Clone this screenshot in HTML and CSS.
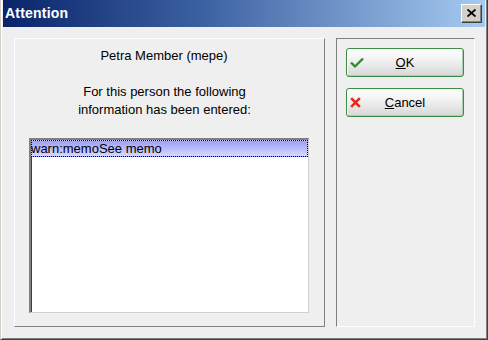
FILE: index.html
```html
<!DOCTYPE html>
<html>
<head>
<meta charset="utf-8">
<link rel="stylesheet" href="styles.css">
</head>
<body>
<div class="window">
  <div class="titlebar">
    <span class="title">Attention</span>
    <div class="close">
      <svg width="9" height="8" viewBox="0 0 9 8"><path d="M0.5 0.5 L8.5 7.5 M8.5 0.5 L0.5 7.5" stroke="#000" stroke-width="1.8" fill="none"/></svg>
    </div>
  </div>
  <div class="body">
    <div class="panel-left">
      <div class="name">Petra Member (mepe)</div>
      <div class="msg">For this person the following<br>information has been entered:</div>
      <div class="listbox">
        <div class="item selected">warn:memoSee memo</div>
      </div>
    </div>
    <div class="panel-right">
      <button class="btn btn-default">
        <svg class="ico" width="14" height="11" viewBox="0 0 14 11"><path d="M1 5.5 L5 9.5 L13 1.5" stroke="#2e8b2e" stroke-width="2.4" fill="none" stroke-linejoin="round"/></svg>
        <span class="label"><u>O</u>K</span>
      </button>
      <button class="btn">
        <svg class="ico" width="11" height="11" viewBox="0 0 11 11"><path d="M1.2 1.2 L9.8 9.8 M9.8 1.2 L1.2 9.8" stroke="#e8281c" stroke-width="2.6" fill="none"/></svg>
        <span class="label"><u>C</u>ancel</span>
      </button>
    </div>
  </div>
</div>
</body>
</html>
```
FILE: styles.css
```css
* { box-sizing: border-box; }
html, body { margin: 0; padding: 0; }
body {
  width: 488px;
  height: 340px;
  overflow: hidden;
  font-family: "Liberation Sans", Arial, sans-serif;
  font-size: 13px;
  color: #000;
  background: #efefef;
}
.window {
  width: 488px;
  height: 340px;
  display: flex;
  flex-direction: column;
  border-left: 1px solid #d4d0c8;
  border-right: 1px solid #404040;
  border-bottom: 1px solid #404040;
  box-shadow: inset 1px 0 0 #fff, inset -1px -1px 0 #808080;
  background: #efefef;
}
.titlebar {
  height: 27px;
  margin: 0 2px 0 2px;
  display: flex;
  align-items: center;
  justify-content: space-between;
  padding: 0 3px 1px 2px;
  background: linear-gradient(to right, #0a246a 0%, #3a5fa0 40%, #a6caf0 100%);
}
.title {
  color: #fff;
  font-weight: bold;
  font-size: 14px;
  letter-spacing: 0.2px;
}
.close {
  width: 21px;
  height: 19px;
  margin-top: 1px;
  background: #d4d0c8;
  border-top: 1px solid #fff;
  border-left: 1px solid #fff;
  border-right: 1px solid #404040;
  border-bottom: 1px solid #404040;
  box-shadow: inset -1px -1px 0 #808080;
  display: flex;
  align-items: center;
  justify-content: center;
  padding-bottom: 1px;
}
.body {
  flex: 1;
  display: flex;
  padding: 11px 12px 12px 13px;
  gap: 11px;
}
.panel-left {
  width: 311px;
  border-top: 1px solid #fff;
  border-left: 1px solid #fff;
  border-right: 1px solid #808080;
  border-bottom: 1px solid #808080;
  display: flex;
  flex-direction: column;
  align-items: center;
  padding: 8px 15px 13px 14px;
}
.name {
  line-height: 18px;
  margin-left: -10px;
}
.msg {
  margin-top: 18px;
  line-height: 18px;
  text-align: center;
  margin-left: -9px;
}
.listbox {
  margin-top: 19px;
  align-self: stretch;
  flex: 1;
  background: #fff;
  border-top: 2px solid #808080;
  border-left: 2px solid #808080;
  border-right: 1px solid #d4d0c8;
  border-bottom: 1px solid #d4d0c8;
  box-shadow: inset 1px 1px 0 #404040;
}
.item {
  height: 17px;
  line-height: 15px;
  white-space: nowrap;
  text-indent: -1px;
}
.selected {
  background: linear-gradient(to bottom, #9ca0f8, #d6d8fc);
  border: 1px dotted #000;
  color: #000;
}
.panel-right {
  flex: 1;
  border-top: 1px solid #808080;
  border-left: 1px solid #808080;
  border-right: 1px solid #fff;
  border-bottom: 1px solid #fff;
  display: flex;
  flex-direction: column;
  gap: 11px;
  padding: 9px 10px 0 9px;
}
.btn {
  width: 118px;
  height: 29px;
  padding: 0 3px;
  display: grid;
  grid-template-columns: 16px 1fr 16px;
  align-items: center;
  font-family: "Liberation Sans", Arial, sans-serif;
  font-size: 13px;
  color: #000;
  border: 1px solid #3c8c46;
  border-radius: 3px;
  background: linear-gradient(to bottom, #ffffff 0%, #f4f4f4 35%, #e2e2e2 75%, #d8d8d8 100%);
  box-shadow: inset 1px 1px 0 #fff, inset -1px -1px 0 #a9cfae;
}
.btn .ico { justify-self: start; }
.btn .label { text-align: center; }
.btn u { text-decoration: underline; text-underline-offset: 1px; }
```
